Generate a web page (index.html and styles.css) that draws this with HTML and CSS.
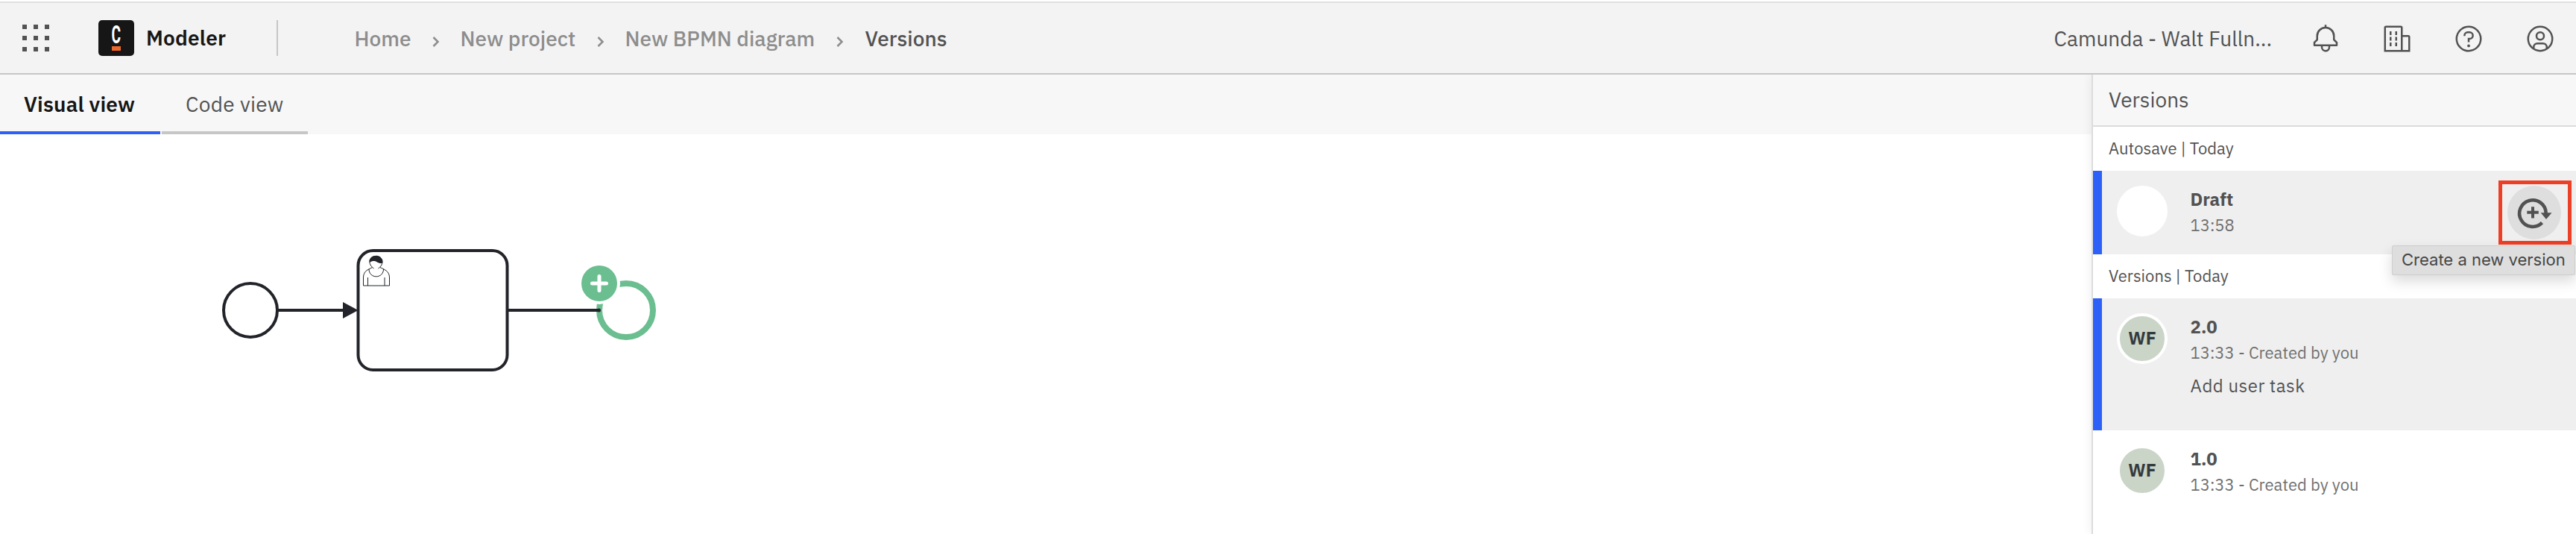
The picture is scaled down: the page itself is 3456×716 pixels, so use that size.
FILE: index.html
```
<!DOCTYPE html>
<html lang="en">
<head>
<meta charset="utf-8">
<title>Modeler</title>
<link rel="stylesheet" href="styles.css">
</head>
<body>
<header class="header">
  <svg class="switcher" viewBox="0 0 36 36"><path d="M0 0h6v6H0zM15 0h6v6h-6zM30 0h6v6h-6zM0 15h6v6H0zM15 15h6v6h-6zM30 15h6v6h-6zM0 30h6v6H0zM15 30h6v6h-6zM30 30h6v6h-6z"/></svg>
  <div class="logo"><span class="logo-letter">C</span><span class="logo-bar"></span></div>
  <div class="app-name">Modeler</div>
  <div class="divider"></div>
  <nav class="crumbs">
    <span class="crumb crumb-home">Home</span>
    <svg class="chevron" viewBox="0 0 10 16"><path d="M1.500 2l6 6-6 6"/></svg>
    <span class="crumb crumb-project">New project</span>
    <svg class="chevron" viewBox="0 0 10 16"><path d="M1.500 2l6 6-6 6"/></svg>
    <span class="crumb crumb-diagram">New BPMN diagram</span>
    <svg class="chevron" viewBox="0 0 10 16"><path d="M1.500 2l6 6-6 6"/></svg>
    <span class="crumb crumb-current">Versions</span>
  </nav>
  <div class="org">Camunda - Walt Fulln...</div>
  <div class="actions">
    <svg class="icon" viewBox="0 0 32 32"><path d="M28.707 19.293 26 16.586V13a10.014 10.014 0 0 0-9-9.95V1h-2v2.05A10.014 10.014 0 0 0 6 13v3.586l-2.707 2.707A1 1 0 0 0 3 20v3a1 1 0 0 0 1 1h7v.777a5.152 5.152 0 0 0 4.500 5.199A5.006 5.006 0 0 0 21 25v-1h7a1 1 0 0 0 1-1v-3a1 1 0 0 0-.293-.707ZM19 25a3 3 0 0 1-6 0v-1h6Zm8-3H5v-1.586l2.707-2.707A1 1 0 0 0 8 17v-4a8 8 0 0 1 16 0v4a1 1 0 0 0 .293.707L27 20.414Z"/></svg>
    <svg class="icon" viewBox="0 0 32 32"><path d="M8 8h2v4H8zM8 14h2v4H8zM8 20h2v4H8zM14 8h2v4h-2zM14 14h2v4h-2zM14 20h2v4h-2z"/><path d="M30 14a2 2 0 0 0-2-2h-6V4a2 2 0 0 0-2-2H4a2 2 0 0 0-2 2v26h28ZM4 4h16v24H4Zm18 24V14h6v14Z"/></svg>
    <svg class="icon" viewBox="0 0 32 32"><circle class="line" cx="16" cy="16" r="13"/><path class="line" d="M11.500 13v-.500A3.500 3.500 0 0 1 15 9h2a3.500 3.500 0 0 1 0 7h-1v3.500"/><circle cx="16" cy="23.500" r="1.500"/></svg>
    <svg class="icon" viewBox="0 0 32 32"><circle class="line" cx="16" cy="16" r="13"/><circle class="line" cx="16" cy="13" r="4"/><path class="line" d="M9 26.500V25a4 4 0 0 1 4-4h6a4 4 0 0 1 4 4v1.500"/></svg>
  </div>
</header>
<main class="main">
  <section class="workspace">
    <div class="tabs">
      <div class="tab tab-active">Visual view</div>
      <div class="tab tab-code">Code view</div>
    </div>
    <svg class="canvas" viewBox="0 180 2806 536">
      <g class="shape">
        <circle cx="336" cy="416" r="36"/>
        <path d="M373 416h90"/>
        <rect x="480.500" y="336" width="200" height="160" rx="20"/>
      </g>
      <path class="solid" d="M460 405l20.500 11-20.500 11z"/>
      <g class="user">
        <path d="M499.500 358.500c-4 2.500-12 4-12 13.500v11h35v-11c0-9-8-11-12.500-13.500M495 361c0 6 4.500 9.800 9.800 9.800s9.700-4 9.700-9.800M493.500 372v11M516 372v11"/>
        <path d="M501.500 360c-3-2-5.700-5-5.700-9.500 0-4.300 4-7 8.600-7s8.600 2.700 8.600 7c0 4.500-2.500 7.500-5.500 9.500"/>
        <path class="solid" d="M495.800 352c-.500-6 3.500-9.300 8.700-9.300s9.300 4 8.700 10.300c-4 .500-6.500-1-9-2.500-3-1-5.500-.500-8.400 1.500z"/>
      </g>
      <circle class="end" cx="840" cy="416" r="36"/>
      <circle class="gap" cx="804" cy="380" r="28"/>
      <path class="shape" d="M682 416h121.500"/>
      <circle class="solid" cx="803.500" cy="416" r="2.500"/>
      <circle class="badge" cx="804" cy="380" r="24"/>
      <path class="plus" d="M794.500 380h19M804 370.500v19"/>
    </svg>
  </section>
  <aside class="panel">
    <h2 class="panel-title">Versions</h2>
    <div class="group">Autosave | Today</div>
    <div class="row row-draft">
      <div class="avatar avatar-empty"></div>
      <div class="info">
        <div class="name">Draft</div>
        <div class="meta">13:58</div>
      </div>
      <div class="highlight">
        <svg class="create" viewBox="0 0 72 72"><circle class="create-bg" cx="36" cy="36" r="36"/><path class="create-arc" d="M51.700 37a17.800 17.800 0 1 0-5.200 12.700"/><path class="create-fill" d="M44.700 36.300h14.800L52 45z"/><path class="create-fill" d="M32 28.300h4v5.500h5.800v4H36v5.700h-4v-5.700h-5.700v-4H32z"/></svg>
      </div>
      <div class="tooltip">Create a new version</div>
    </div>
    <div class="group">Versions | Today</div>
    <div class="row row-two">
      <div class="avatar">WF</div>
      <div class="info">
        <div class="name">2.0</div>
        <div class="meta">13:33 - Created by you</div>
        <div class="note">Add user task</div>
      </div>
    </div>
    <div class="row row-one">
      <div class="avatar">WF</div>
      <div class="info">
        <div class="name">1.0</div>
        <div class="meta">13:33 - Created by you</div>
      </div>
    </div>
  </aside>
</main>
</body>
</html>
```
FILE: styles.css
```
* { box-sizing: border-box; }
body {
  margin: 0;
  width: 3456px;
  height: 716px;
  overflow: hidden;
  background: #fff;
  color: #525252;
  font-family: "IBM Plex Sans", Roboto, "Liberation Sans", sans-serif;
  font-size: 28px;
  line-height: 36px;
  white-space: nowrap;
}
svg { display: block; flex: none; }

/* Top bar */
.header {
  display: flex;
  align-items: flex-start;
  height: 98px;
  margin-top: 2px;
  padding: 23px 28px 0 30px;
  border-top: 2px solid #e0e0e0;
  border-bottom: 2px solid #c6c6c6;
  background: #f3f3f3;
}
.switcher { width: 36px; height: 36px; margin-top: 6px; fill: #525252; }
.logo {
  display: flex;
  flex-direction: column;
  align-items: center;
  width: 48px;
  height: 48px;
  margin-left: 66px;
  padding-top: 7px;
  border-radius: 5px;
  background: #161616;
}
.logo-letter {
  height: 28px;
  color: #fff;
  font: 700 33px/25px Roboto, sans-serif;
  transform: scaleX(.58);
}
.logo-bar { width: 12px; height: 6px; background: #ec682c; }
.app-name {
  width: 175px;
  margin: 6px 0 0 16px;
  color: #161616;
  font-weight: 600;
  letter-spacing: .2px;
}
.divider { width: 2px; height: 48px; background: #c6c6c6; }
.crumbs { display: flex; margin: 7px 0 0 102.5px; color: #8d8d8d; font-weight: 500; }
.crumb-home { width: 104px; }
.crumb-project { width: 183px; }
.crumb-diagram { width: 283px; }
.crumb-current { margin-left: 1px; color: #525252; }
.chevron { width: 10px; height: 16px; margin: 14px 28px 0 0; fill: none; stroke: #8d8d8d; stroke-width: 2.5; }
.org { margin: 7px 0 0 auto; }
.actions { display: flex; gap: 56px; margin: 5px 0 0 52px; }
.icon { width: 40px; height: 40px; fill: #525252; }
.line { fill: none; stroke: #525252; stroke-width: 2; }

/* Workspace */
.main { display: flex; height: 616px; }
.workspace { width: 2806px; }
.tabs { display: flex; gap: 2px; height: 80px; background: #f7f7f7; }
.tab { height: 80px; padding: 22px 0 0 32px; border-bottom: 4px solid #c6c6c6; letter-spacing: .32px; }
.tab-active { width: 215px; border-color: #2d60f6; color: #161616; font-weight: 600; letter-spacing: .16px; }
.tab-code { width: 196px; }
.canvas { width: 2806px; height: 536px; }
.shape { fill: none; stroke: #22242a; stroke-width: 4; }
.solid { fill: #22242a; }
.user { fill: none; stroke: #22242a; stroke-width: 1; }
.user .solid { fill: #22242a; stroke: none; }
.end { fill: none; stroke: #6bbe90; stroke-width: 8; }
.gap { fill: #fff; }
.badge { fill: #6bbe90; }
.plus { stroke: #fff; stroke-width: 5; stroke-linecap: round; }

/* Version history */
.panel {
  position: relative;
  width: 650px;
  border-left: 2px solid #dcdcdc;
  background: #fff;
  box-shadow: -2px 0 12px rgba(0, 0, 0, .06);
  clip-path: inset(0 0 0 -20px);
}
.panel-title {
  height: 70px;
  margin: 0;
  padding: 16px 0 0 21px;
  border-bottom: 2px solid #dcdcdc;
  background: #f7f7f7;
  font-size: 28px;
  font-weight: 400;
}
.group { height: 59px; padding: 15px 0 0 21px; font-size: 22px; line-height: 28px; }
.row { position: relative; display: flex; padding: 20px 0 0 20px; border-left: 12px solid #2d60f6; background: #efefef; }
.row-draft { height: 112px; }
.row-two { height: 177px; }
.row-one { height: 139px; border-color: #fff; background: #fff; }
.avatar {
  width: 68px;
  height: 68px;
  border: 4px solid #fff;
  border-radius: 50%;
  background: #cad4c7;
  color: #343a3c;
  font-size: 24px;
  font-weight: 700;
  line-height: 58px;
  text-align: center;
}
.avatar-empty { background: #fff; }
.info { margin-left: 30.5px; }
.name { margin-top: 1px; font-size: 24px; font-weight: 700; line-height: 34px; }
.meta { margin-top: 1px; color: #6f6f6f; font-size: 22px; line-height: 34px; }
.note { margin-top: 10px; font-size: 24px; line-height: 34px; letter-spacing: .5px; }
.highlight { position: absolute; top: 13px; right: 6px; width: 98px; height: 86px; padding: 2px 7px; border: 5px solid #ec3f25; }
.create { width: 72px; height: 72px; }
.create-bg { fill: #dedede; }
.create-arc { fill: none; stroke: #525252; stroke-width: 4.6; }
.create-fill { fill: #525252; }
.tooltip {
  position: absolute;
  z-index: 2;
  top: 100px;
  right: 1px;
  width: 246px;
  height: 40px;
  padding: 4px 0 0 12px;
  border: 1px solid #cecece;
  border-radius: 2px;
  background: #dedede;
  color: #464646;
  font: 22px/28px Inter, sans-serif;
  box-shadow: 0 8px 18px rgba(0, 0, 0, .15);
}
```
